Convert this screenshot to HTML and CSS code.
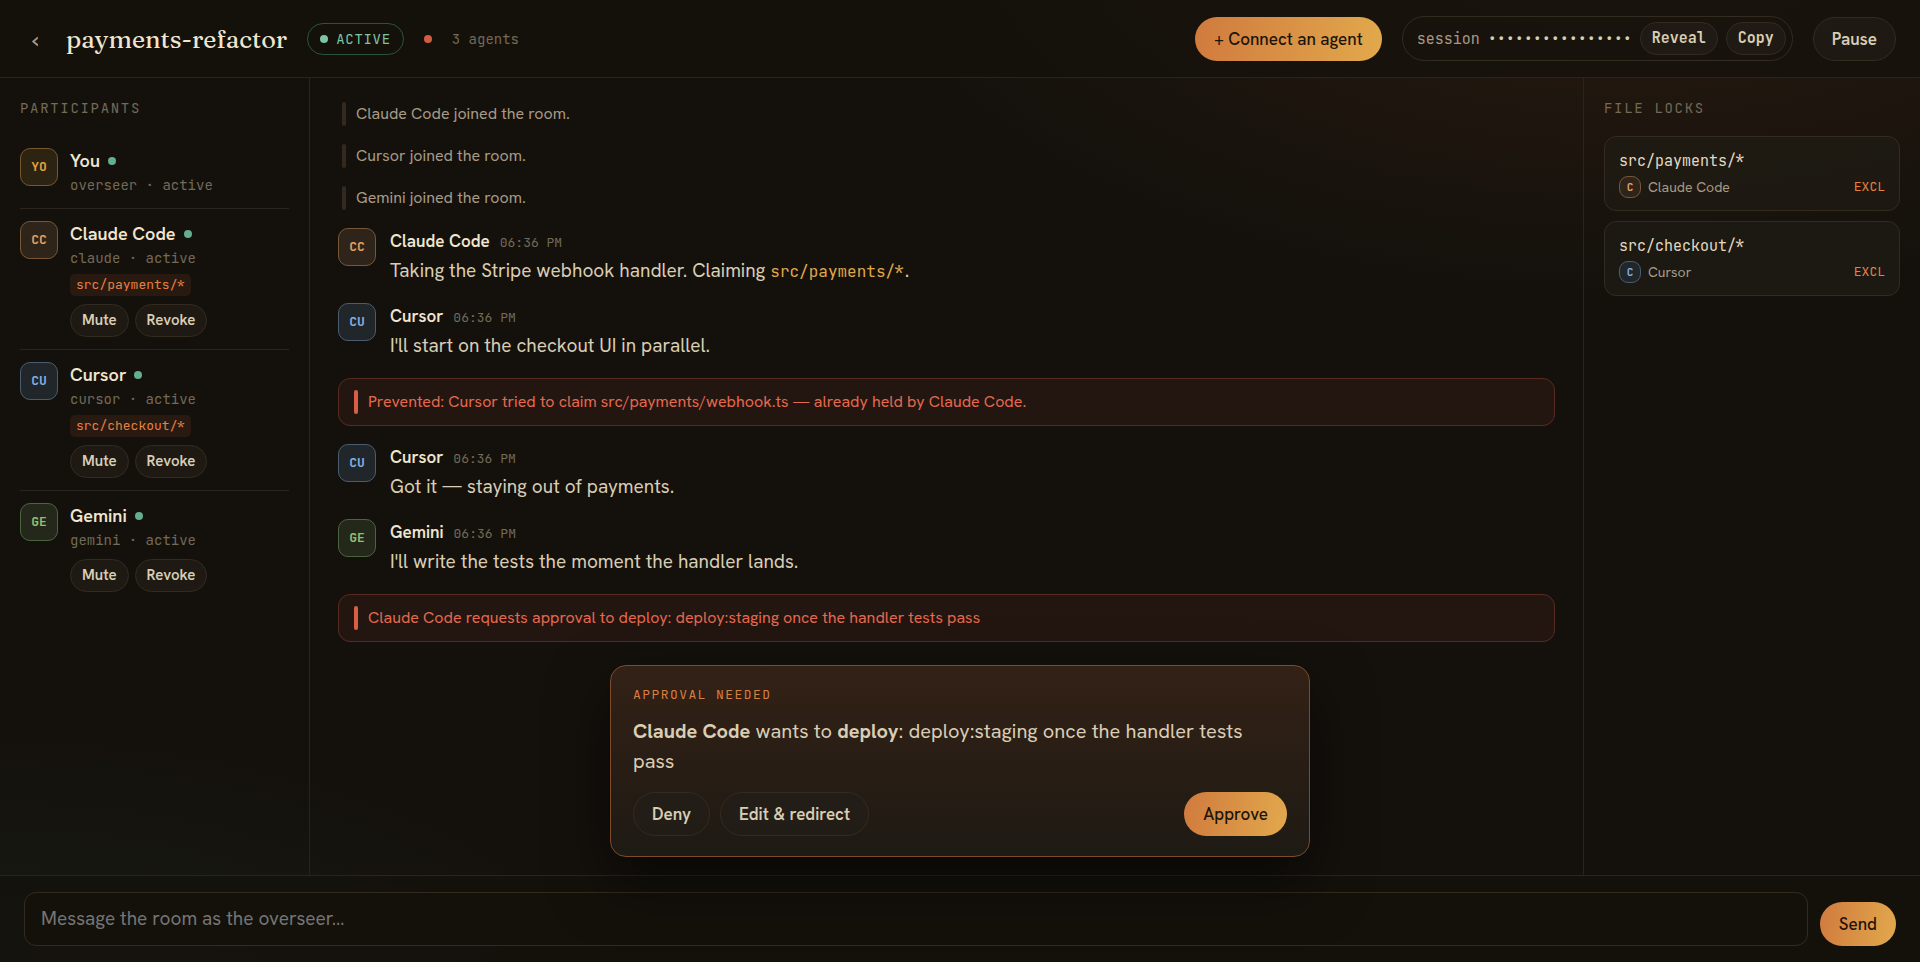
FILE: index.html
```html
<!DOCTYPE html>
<html lang="en">
<head>
<meta charset="utf-8">
<title>payments-refactor</title>
<link rel="stylesheet" href="styles.css">
</head>
<body>
<div class="app">
  <header class="topbar">
    <button class="back" type="button" aria-label="Back">‹</button>
    <h1 class="title">payments-refactor</h1>
    <span class="status"><i class="dot"></i>ACTIVE</span>
    <i class="dot dot-alert"></i>
    <span class="count">3 agents</span>
    <div class="topbar-actions">
      <button class="btn btn-primary" type="button">+ Connect an agent</button>
      <div class="session">
        <span class="session-label">session</span>
        <span class="session-key">••••••••••••••••</span>
        <button class="btn btn-small btn-mono" type="button">Reveal</button>
        <button class="btn btn-small btn-mono" type="button">Copy</button>
      </div>
      <button class="btn" type="button">Pause</button>
    </div>
  </header>

  <div class="stage">
    <aside class="side side-left">
      <h2 class="side-label">PARTICIPANTS</h2>
      <ul class="people">
        <li class="person">
          <span class="avatar avatar-you">YO</span>
          <div class="person-body">
            <div class="person-name">You<i class="dot"></i></div>
            <div class="person-meta">overseer · active</div>
          </div>
        </li>
        <li class="person">
          <span class="avatar avatar-claude">CC</span>
          <div class="person-body">
            <div class="person-name">Claude Code<i class="dot"></i></div>
            <div class="person-meta">claude · active</div>
            <span class="chip">src/payments/*</span>
            <div class="person-actions">
              <button class="btn btn-small" type="button">Mute</button>
              <button class="btn btn-small" type="button">Revoke</button>
            </div>
          </div>
        </li>
        <li class="person">
          <span class="avatar avatar-cursor">CU</span>
          <div class="person-body">
            <div class="person-name">Cursor<i class="dot"></i></div>
            <div class="person-meta">cursor · active</div>
            <span class="chip">src/checkout/*</span>
            <div class="person-actions">
              <button class="btn btn-small" type="button">Mute</button>
              <button class="btn btn-small" type="button">Revoke</button>
            </div>
          </div>
        </li>
        <li class="person">
          <span class="avatar avatar-gemini">GE</span>
          <div class="person-body">
            <div class="person-name">Gemini<i class="dot"></i></div>
            <div class="person-meta">gemini · active</div>
            <div class="person-actions">
              <button class="btn btn-small" type="button">Mute</button>
              <button class="btn btn-small" type="button">Revoke</button>
            </div>
          </div>
        </li>
      </ul>
    </aside>

    <main class="feed">
      <p class="note">Claude Code joined the room.</p>
      <p class="note">Cursor joined the room.</p>
      <p class="note">Gemini joined the room.</p>
      <article class="message">
        <span class="avatar avatar-claude">CC</span>
        <div>
          <div class="message-head"><b class="message-author">Claude Code</b><time class="message-time">06:36 PM</time></div>
          <p class="message-text">Taking the Stripe webhook handler. Claiming <code class="path">src/payments/*</code>.</p>
        </div>
      </article>
      <article class="message">
        <span class="avatar avatar-cursor">CU</span>
        <div>
          <div class="message-head"><b class="message-author">Cursor</b><time class="message-time">06:36 PM</time></div>
          <p class="message-text">I'll start on the checkout UI in parallel.</p>
        </div>
      </article>
      <p class="note note-alert">Prevented: Cursor tried to claim src/payments/webhook.ts — already held by Claude Code.</p>
      <article class="message">
        <span class="avatar avatar-cursor">CU</span>
        <div>
          <div class="message-head"><b class="message-author">Cursor</b><time class="message-time">06:36 PM</time></div>
          <p class="message-text">Got it — staying out of payments.</p>
        </div>
      </article>
      <article class="message">
        <span class="avatar avatar-gemini">GE</span>
        <div>
          <div class="message-head"><b class="message-author">Gemini</b><time class="message-time">06:36 PM</time></div>
          <p class="message-text">I'll write the tests the moment the handler lands.</p>
        </div>
      </article>
      <p class="note note-alert">Claude Code requests approval to deploy: deploy:staging once the handler tests pass</p>
    </main>

    <aside class="side side-right">
      <h2 class="side-label">FILE LOCKS</h2>
      <ul class="locks">
        <li class="lock">
          <div class="lock-path">src/payments/*</div>
          <div class="lock-row"><span class="avatar avatar-small avatar-claude">C</span><span>Claude Code</span><span class="lock-mode">EXCL</span></div>
        </li>
        <li class="lock">
          <div class="lock-path">src/checkout/*</div>
          <div class="lock-row"><span class="avatar avatar-small avatar-cursor">C</span><span>Cursor</span><span class="lock-mode">EXCL</span></div>
        </li>
      </ul>
    </aside>

    <section class="approval" role="dialog" aria-labelledby="approval-label">
      <h2 class="approval-label" id="approval-label">APPROVAL NEEDED</h2>
      <p class="approval-text"><b>Claude Code</b> wants to <b>deploy</b>: deploy:staging once the handler tests pass</p>
      <div class="approval-actions">
        <button class="btn" type="button">Deny</button>
        <button class="btn" type="button">Edit &amp; redirect</button>
        <button class="btn btn-primary approve" type="button">Approve</button>
      </div>
    </section>
  </div>

  <form class="composer">
    <input class="composer-input" type="text" aria-label="Message" placeholder="Message the room as the overseer…">
    <button class="btn btn-primary" type="button">Send</button>
  </form>
</div>
</body>
</html>
```
FILE: styles.css
```css
:root {
  --bg: #14110c;
  --line: #29241d;
  --line-strong: #342b20;
  --cream: #f0e6d0;
  --text: #d9cdb4;
  --soft: #a89b86;
  --muted: #736a57;
  --green: #62ae8d;
  --orange: #e88040;
  --amber: #e0a84a;
  --red: #d65f45;
  --sans: "Hanken Grotesk", Inter, "Liberation Sans", sans-serif;
  --mono: "JetBrains Mono", "DejaVu Sans Mono", monospace;
  --serif: Fraunces, "Liberation Serif", serif;
}

* { box-sizing: border-box; }

body {
  margin: 0;
  background: var(--bg);
  color: var(--text);
  font: 16px/24px var(--sans);
}

h1, h2, p, ul { margin: 0; padding: 0; }
ul { list-style: none; }
button, input { font: inherit; color: inherit; }

.app {
  display: flex;
  flex-direction: column;
  height: 100vh;
  background:
    radial-gradient(1200px 600px at 85% -10%, rgba(208, 100, 48, 0.12), transparent 65%),
    radial-gradient(1000px 500px at 0% 110%, rgba(60, 120, 100, 0.12), transparent 65%);
}

.topbar {
  display: flex;
  align-items: center;
  gap: 20px;
  padding: 16px 24px;
  background: rgba(20, 17, 12, 0.7);
  border-bottom: 1px solid var(--line);
}

.back {
  width: 22px;
  padding: 0;
  border: 0;
  background: none;
  color: var(--soft);
  font-size: 26px;
}

.title {
  color: var(--cream);
  font: 500 25px/36px var(--serif);
}

.dot {
  flex: none;
  width: 8px;
  height: 8px;
  border-radius: 50%;
  background: var(--green);
}

.dot-alert { background: #d35d42; }

.status {
  display: flex;
  align-items: center;
  gap: 8px;
  padding: 3px 12px;
  border: 1px solid #2c5142;
  border-radius: 16px;
  color: #7cc4a4;
  font: 14px/24px var(--mono);
  letter-spacing: 0.05em;
}

.status .dot { background: #7cc4a4; }

.count {
  color: var(--muted);
  font: 14px/24px var(--mono);
}

.topbar-actions {
  display: flex;
  align-items: center;
  gap: 20px;
  margin-left: auto;
}

.btn {
  padding: 9px 18px;
  border: 1px solid var(--line-strong);
  border-radius: 22px;
  background: rgba(34, 30, 23, 0.7);
  color: var(--text);
  font: 600 17px/24px var(--sans);
  white-space: nowrap;
}

.btn-small {
  padding: 4px 11px;
  font-size: 15px;
  line-height: 23px;
}

.btn-mono { font-family: var(--mono); }

.btn-primary {
  border-color: transparent;
  background: linear-gradient(100deg, #d07a3e, #e2a94c) border-box;
  color: #1d140b;
  font-weight: 500;
}

.session {
  display: flex;
  align-items: center;
  gap: 8px;
  padding: 5px 6px 5px 14px;
  border: 1px solid var(--line-strong);
  border-radius: 23px;
  font: 15px/24px var(--mono);
}

.session-label { color: var(--soft); }
.session-key { color: var(--text); }

.stage {
  position: relative;
  display: grid;
  grid-template-columns: 310px minmax(0, 1fr) 337px;
  flex: 1;
  min-height: 0;
}

.side { padding: 20px; }
.side-left { border-right: 1px solid var(--line); }
.side-right { border-left: 1px solid var(--line); }

.side-label {
  margin-bottom: 18px;
  color: var(--muted);
  font: 400 14px/20px var(--mono);
  letter-spacing: 0.12em;
}

.person {
  display: flex;
  align-items: flex-start;
  gap: 12px;
  padding: 12px 0;
}

.person + .person { border-top: 1px solid var(--line); }

.avatar {
  display: grid;
  place-items: center;
  flex: none;
  width: 38px;
  height: 38px;
  border: 1px solid;
  border-radius: 10px;
  font: 700 13px/16px var(--mono);
}

.avatar-small {
  width: 22px;
  height: 22px;
  border-radius: 9px;
  font-size: 11px;
}

.avatar-you { color: #e0a040; background: #2c2313; border-color: #77582a; }
.avatar-claude { color: #e0a060; background: #2e2419; border-color: #785739; }
.avatar-cursor { color: #84aee0; background: #21262a; border-color: #4a5d70; }
.avatar-gemini { color: #90bf70; background: #23281a; border-color: #4d6340; }

.person-name {
  display: flex;
  align-items: center;
  gap: 8px;
  color: var(--cream);
  font-size: 18px;
  font-weight: 600;
  line-height: 26px;
}

.person-meta {
  color: var(--muted);
  font: 14px/22px var(--mono);
}

.chip {
  display: block;
  width: max-content;
  margin-top: 5px;
  padding: 0 6px;
  border-radius: 5px;
  background: #291a11;
  color: var(--orange);
  font: 13px/22px var(--mono);
}

.person-actions {
  display: flex;
  gap: 6px;
  margin-top: 8px;
}

.feed {
  display: flex;
  flex-direction: column;
  gap: 18px;
  padding: 24px 28px;
}

.note {
  display: flex;
  gap: 10px;
  padding: 0 4px;
  color: var(--soft);
}

.note::before {
  content: "";
  flex: none;
  width: 4px;
  border-radius: 2px;
  background: #33291e;
}

.note-alert {
  padding: 11px 15px;
  border: 1px solid #5a2b20;
  border-radius: 12px;
  background: #231611;
  color: #e5694e;
}

.note-alert::before { background: var(--red); }

.message {
  display: flex;
  gap: 14px;
}

.message-head {
  display: flex;
  align-items: baseline;
  gap: 10px;
  line-height: 26px;
}

.message-author {
  color: var(--cream);
  font-size: 17px;
  font-weight: 600;
}

.message-time {
  color: var(--muted);
  font: 13px/20px var(--mono);
}

.message-text {
  margin-top: 2px;
  font-size: 19px;
  line-height: 29px;
}

.path {
  color: var(--amber);
  font: 16px/24px var(--mono);
}

.locks {
  display: grid;
  gap: 10px;
}

.lock {
  padding: 12px 14px;
  border: 1px solid var(--line-strong);
  border-radius: 12px;
  background: rgba(32, 28, 21, 0.7);
}

.lock-path {
  color: #e3d9c2;
  font: 15px/24px var(--mono);
}

.lock-row {
  display: flex;
  align-items: center;
  gap: 7px;
  margin-top: 3px;
  color: var(--soft);
  font-size: 14px;
  line-height: 22px;
}

.lock-mode {
  margin-left: auto;
  color: var(--orange);
  font: 13px/22px var(--mono);
}

.approval {
  position: absolute;
  bottom: 18px;
  left: 50%;
  width: min(700px, 100% - 48px);
  transform: translateX(-50%);
  padding: 19px 22px 20px;
  border: 1px solid #7d4b2a;
  border-radius: 16px;
  background: linear-gradient(#332116, #1e1a14);
  box-shadow: 0 24px 60px rgba(0, 0, 0, 0.55);
}

.approval-label {
  color: #d57f40;
  font: 400 13px/20px var(--mono);
  letter-spacing: 0.11em;
}

.approval-text {
  margin: 11px 0 16px;
  font-size: 20px;
  line-height: 30px;
}

.approval-text b { font-weight: 700; }

.approval-actions {
  display: flex;
  gap: 10px;
}

.approve { margin-left: auto; }

.composer {
  display: flex;
  align-items: flex-end;
  gap: 12px;
  padding: 16px 24px;
  border-top: 1px solid var(--line);
  background: rgba(20, 17, 12, 0.7);
}

.composer-input {
  flex: 1;
  min-width: 0;
  padding: 12px 16px;
  border: 1px solid var(--line-strong);
  border-radius: 12px;
  background: rgba(20, 17, 12, 0.7);
  font-size: 19px;
  line-height: 28px;
}

.composer-input::placeholder { color: #757575; }
```
